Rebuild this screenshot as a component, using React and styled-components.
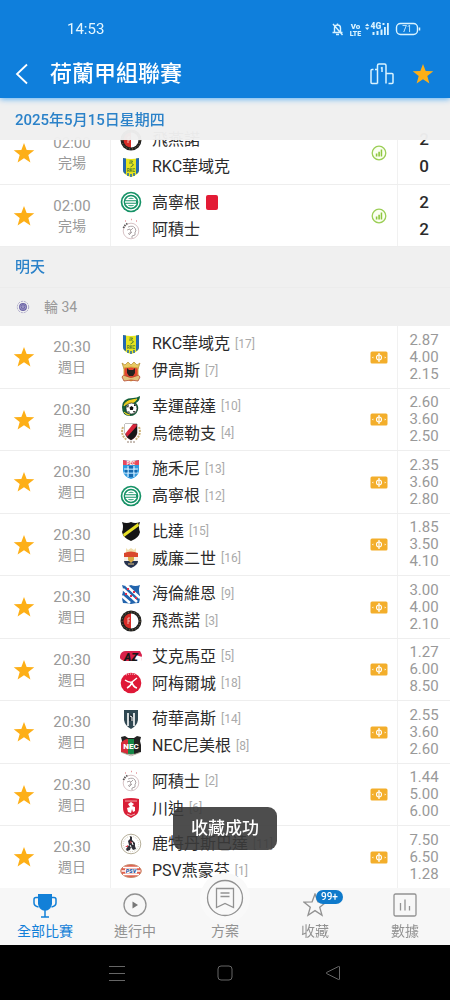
import React from 'react';
import styled, { createGlobalStyle } from 'styled-components';

const Global = createGlobalStyle`
  * { box-sizing: border-box; }
  body {
    margin: 0;
    background: #000;
    font-family: Roboto, "Noto Sans CJK TC", sans-serif;
    color: #2b2b2b;
  }
  button {
    border: 0;
    padding: 0;
    background: none;
    font: inherit;
    color: inherit;
    cursor: pointer;
  }
  svg { display: block; flex: none; }
  ul { list-style: none; margin: 0; padding: 0; }
`;

const Screen = styled.div`
  position: relative;
  display: flex;
  flex-direction: column;
  height: 100vh;
  background: #fff;
`;

const AppHeader = styled.header`
  position: relative;
  z-index: 3;
  flex: none;
  background: #0f7fdc;
  color: #fff;
  box-shadow: 0 1px 6px #58aef2;
`;

const StatusBar = styled.div`
  display: flex;
  align-items: center;
  gap: 8px;
  padding: 19px 28px 0 67px;
  line-height: 20px;
`;

const Clock = styled.time`
  flex: 1;
  color: #e4f6ff;
  font-size: 15px;
`;

const TitleBar = styled.div`
  display: flex;
  align-items: center;
  padding: 17px 16px 7px 14px;
`;

const IconButton = styled.button`
  display: flex;
  align-items: center;
  justify-content: center;
  color: ${(p) => p.$color || 'inherit'};
  margin-left: ${(p) => p.$gap || 0}px;
`;

const Title = styled.h1`
  flex: 1;
  margin: 0 0 0 19px;
  font-size: 22px;
  line-height: 35px;
  font-weight: 500;
`;

const Matches = styled.main`
  flex: 1;
  min-height: 0;
  overflow-y: auto;
  scrollbar-width: none;
`;

const DayHeading = styled.h2`
  position: sticky;
  top: 0;
  z-index: 2;
  margin: 0;
  padding: ${(p) => (p.$pinned ? 2 : 0)}px 15px 0;
  background: rgba(240, 240, 240, 0.97);
  color: #2b82c9;
  font-size: 15px;
  line-height: 40px;
  font-weight: 500;
`;

const RoundHeading = styled.h3`
  display: flex;
  align-items: center;
  gap: 14px;
  margin: 0;
  padding: 0 16px;
  border-top: 1px solid #ececec;
  background: #f0f0f0;
  color: #999;
  font-size: 14px;
  line-height: 38px;
  font-weight: 400;
`;

const MatchList = styled.ul`
  margin-top: ${(p) => (p.$scrolled ? -18 : 0)}px;
`;

const Row = styled.li`
  display: grid;
  grid-template-columns: 48px 48px 14px 1fr 36px 53px;
  align-items: center;
  height: 63px;
  border-bottom: 1px solid #eee;

  &:nth-child(even) { height: 62px; }
`;

const Kickoff = styled.div`
  color: #999;
  text-align: center;
  font-size: 15px;
  line-height: 20px;
`;

const DayName = styled.div`
  font-size: 14px;
`;

const Teams = styled.div`
  grid-column: 4;
  align-self: stretch;
  display: flex;
  flex-direction: column;
  justify-content: center;
  padding-left: 9px;
  border-left: 1px solid #f1f1f1;
`;

const Team = styled.div`
  display: flex;
  align-items: center;
  height: 27px;
  font-size: 16px;
  white-space: nowrap;
`;

const TeamName = styled.span`
  margin-left: 10px;
  font-size: 16px;
  line-height: 27px;
`;

const Rank = styled.span`
  margin-left: 5px;
  color: #aaa;
  font-size: 12px;
`;

const RedCard = styled.span`
  width: 12px;
  height: 15px;
  margin-left: 6px;
  border-radius: 2px;
  background: #e31b35;
`;

const Mark = styled.div`
  display: flex;
  justify-content: center;
`;

const Figures = styled.div`
  display: flex;
  flex-direction: column;
  justify-content: center;
  align-self: stretch;
  border-left: 1px solid #f1f1f1;
  text-align: center;
  color: ${(p) => (p.$final ? '#2b2b2b' : '#999')};
  font-size: ${(p) => (p.$final ? 17 : 15)}px;
  font-weight: ${(p) => (p.$final ? 500 : 400)};
  line-height: ${(p) => (p.$final ? 27 : 17)}px;
`;

const Toast = styled.div`
  position: absolute;
  z-index: 5;
  bottom: 150px;
  left: 50%;
  transform: translateX(-50%);
  padding: 0 18px;
  border-radius: 9px;
  background: rgba(58, 58, 58, 0.9);
  color: #fff;
  font-size: 17px;
  line-height: 43px;
  font-weight: 500;
  white-space: nowrap;
`;

const TabBar = styled.nav`
  position: relative;
  z-index: 3;
  flex: none;
  display: grid;
  grid-template-columns: repeat(5, 1fr);
  background: #f7f7f7;
`;

const Tab = styled.button`
  position: relative;
  display: flex;
  flex-direction: column;
  align-items: center;
  justify-content: flex-end;
  height: 57px;
  padding-bottom: 4px;
  color: ${(p) => (p.$active ? '#1280d8' : '#929292')};
  font-size: 14px;
  line-height: 20px;
`;

const TabIcon = styled.span`
  display: flex;
  align-items: center;
  justify-content: center;
  height: 26px;
  margin-bottom: 3px;
`;

const RaisedIcon = styled.span`
  position: absolute;
  top: -15px;
  display: flex;
  padding: 6px;
  border-radius: 50%;
  background: #f9f9f9;
`;

const Badge = styled.span`
  position: absolute;
  top: 2px;
  left: 50%;
  margin-left: 1px;
  padding: 0 5px;
  border-radius: 8px;
  background: #0f7acb;
  color: #fff;
  font-size: 10px;
  line-height: 14px;
  font-weight: 500;
`;

const SystemBar = styled.div`
  flex: none;
  display: flex;
  justify-content: center;
  align-items: center;
  gap: 92px;
  height: 55px;
  background: #000;
  color: #666;
`;

const Star = ({ size = 22, filled = true }) => (
  <svg width={size} height={size} viewBox="0 0 24 24" fill={filled ? '#fdaf17' : 'none'} stroke={filled ? 'none' : 'currentColor'} strokeWidth="1.3">
    <path d="M12 1l2.9 7.8 8.3.3-6.5 5.2 2.3 8L12 17.6 5 22.3l2.3-8L.8 9.1l8.3-.3z" />
  </svg>
);

const StatusIcons = () => (
  <svg width="91" height="16" viewBox="0 0 91 16" fill="none" stroke="#d9f3ff" strokeWidth="1.4" fontFamily="Roboto">
    <path d="M1.500 11.500h10M3.500 11V7a3 3 0 0 1 6 0V11M6.500 2.500V4M5 13.500h3M2 3l9.500 11" />
    <g fill="#d9f3ff" stroke="none" fontWeight="900">
      <text x="24.500" y="7.500" fontSize="8" textAnchor="middle">Vo</text>
      <text x="24.500" y="14.500" fontSize="7" textAnchor="middle" letterSpacing="0">LTE</text>
      <path d="M34 5l2.200-2.500L38.400 5zM34 6.500L36.200 9l2.200-2.500z" />
      <text x="39.500" y="8" fontSize="8.500">4G</text>
      <path d="M41.500 11h2v3h-2zM45.500 10h2v4h-2zM49.500 8.500h2V14h-2zM51.500 2h2v2h-2zM53 6h1.800v8H53zM56 2h1.800v12H56z" />
    </g>
    <rect x="65.500" y="2.500" width="21" height="11" rx="4" />
    <path d="M88.500 6.500v3" strokeWidth="1.500" />
    <text x="76" y="11" fontSize="8.500" textAnchor="middle" fill="#d9f3ff" stroke="none">71</text>
  </svg>
);

const StatsMark = () => (
  <svg width="16" height="16" viewBox="0 0 16 16" role="img" aria-label="統計">
    <circle cx="8" cy="8" r="6.800" fill="#fbfff2" stroke="#9bce56" strokeWidth="1.300" />
    <path d="M4.800 8.500h1.600v3H4.800zM7.300 6.800h1.600v4.700H7.300zM9.700 4.500h1.500v7H9.700z" fill="#8dc63f" />
  </svg>
);

const OddsMark = () => (
  <svg width="18" height="13" viewBox="0 0 18 13" role="img" aria-label="賠率">
    <rect x=".5" y=".5" width="17" height="12" rx="1.500" fill="#f3ae2b" />
    <circle cx="9" cy="6.500" r="2.500" fill="none" stroke="#fff" strokeWidth="1.100" />
    <path d="M9 2v9" stroke="#fff" strokeWidth="1.200" />
    <path d="M2 6.500l1.300-1v2zM16 6.500l-1.300-1v2z" fill="#fff" />
  </svg>
);

const RoundMark = () => (
  <svg width="14" height="14" viewBox="0 0 14 14" fill="none" stroke="#6b63a6">
    <circle cx="7" cy="7" r="5.700" stroke="#aaa6c8" strokeDasharray="2 1" />
    <circle cx="7" cy="7" r="3.300" fill="#c9c5df" strokeWidth="1.300" />
    <path d="M5 6l2-1.500L9 6 8 9H6zM7 4.500V9" />
  </svg>
);

const crests = {
  rkc: (
    <>
      <path d="M3 2q8 2 16 0v13q-1 4-8 6-7-2-8-6z" fill="#e7e51f" />
      <path d="M3 2l3 .6V18q-3-1-3-4zM19 2l-3 .6V18q3-1 3-4z" fill="#2368b0" />
      <path d="M8 17v3M11 18v3M14 17v3" stroke="#2368b0" strokeWidth="1.500" />
      <path d="M9.500 5h3l-1 2 2 2-3 2M9 7h2" stroke="#4c7d31" fill="none" />
      <text x="11" y="15.500" fontSize="4.500" textAnchor="middle" fill="#4c7d31" fontWeight="700">RKC</text>
    </>
  ),
  gae: (
    <>
      <path d="M2 3l3 2 3-3 3 3 3-3 3 3 3-2-2 6H4z" fill="#e8ca62" stroke="#b38b30" strokeWidth=".7" />
      <path d="M4 8q7-2 14 0v7q-1 4-7 6-6-2-7-6z" fill="#e24431" stroke="#d5a43c" />
      <path d="M7 8l2 2h4l2-2v5l-2 3H9l-2-3z" fill="#25211e" />
      <path d="M2 17q1-3 4-1 5 3 10 0 3-2 4 1l-2 4q-7-2-14 0z" fill="#e1c27c" stroke="#b5472c" strokeWidth=".8" />
    </>
  ),
  fortuna: (
    <>
      <path d="M2 12Q2 3 13 3q4 0 7-2 0 5-4 7 3 3 2 7-2 6-8 6-8 0-8-9z" fill="#17603b" />
      <path d="M4 11q1-5 8-6l5-1q-2 4-7 4-5 1-6 3zM4 17q2 3 6 3" fill="#f0cf22" stroke="#f0cf22" />
      <circle cx="11.500" cy="13.500" r="5.500" fill="#fff" stroke="#222" strokeWidth=".7" />
      <path d="M11.500 11l2 1.500-.7 2.500h-2.600l-.7-2.500zM7 11l2-1-1 3zM14 9l2 2-2 0zM15 16l-1 2-1-2zM8 16l2 1-1 1z" fill="#111" />
    </>
  ),
  utrecht: (
    <>
      <path d="M3 5Q0 13 7 18M19 5q3 8-4 13" fill="none" stroke="#ceb47b" strokeWidth="2" strokeDasharray="2 1" />
      <path d="M5 2h12v9q-1 5-6 7-5-2-6-7z" fill="#d8263b" stroke="#333" strokeWidth=".6" />
      <path d="M5 2h8L5 12z" fill="#fff" />
      <path d="M7 15L17 4v7q-1 4-6 7z" fill="#171717" />
      <path d="M7 20h8" stroke="#b8aba0" strokeWidth="1.500" strokeDasharray="2 1" />
    </>
  ),
  pec: (
    <>
      <path d="M3 2q8 2 16 0v11q-1 6-8 8-7-2-8-8z" fill="#329bdf" />
      <path d="M3 2q8 2 16 0v5H3z" fill="#e9485b" />
      <text x="11" y="6.500" fontSize="4.500" textAnchor="middle" fill="#fff" fontWeight="700">PEC</text>
      <path d="M4 11h14M4 15h14M8 8v11M14 8v11" stroke="#e7f4ff" />
      <path d="M9 8h4v2.500H9zM5 12h2.500v2.500H5zM14.500 12H17v2.500h-2.500zM9 16h4v3H9zM9 12h4v2.500H9z" fill="#1769ae" />
    </>
  ),
  groningen: (
    <>
      <circle cx="11" cy="11" r="10.300" fill="#159266" />
      <circle cx="11" cy="11" r="8" fill="none" stroke="#fff" strokeWidth="1.300" />
      <path d="M15.500 8.500Q14 6 11 6T6.500 8.500zM6.500 13.500Q8 16 11 16t4.500-2.500z" fill="none" stroke="#fff" strokeWidth="1.300" />
      <path d="M5 11h4M9 11h7" stroke="#fff" strokeWidth="1.300" />
    </>
  ),
  nac: (
    <>
      <path d="M2 2q5 2 9 0 4 2 9 0-2 5 0 10-1 6-9 9-8-3-9-9 2-5 0-10z" fill="#151515" />
      <path d="M3 14L18 3l1 3L4 17z" fill="#e7df28" />
    </>
  ),
  willem: (
    <>
      <path d="M6 1l2 2 3-2 3 2 2-2v5H6z" fill="#f0dfae" />
      <path d="M4 6q7-3 14 0v4H4z" fill="#d9472c" />
      <path d="M4 10h14v4H4z" fill="#f6efe4" />
      <path d="M4 14h14q0 4-7 7-7-3-7-7z" fill="#27334f" />
      <path d="M8 10h6v3l-3 3-3-3z" fill="#d8aa43" />
      <path d="M8 17h6" stroke="#e3c887" strokeWidth="1" />
    </>
  ),
  heerenveen: (
    <>
      <path d="M2 2q5 2 9 0 4 2 9 0-2 5 0 10 0 5-1 8-4 0-8 1-4-1-8-1-1-3-1-8 2-5 0-10z" fill="#2264ad" />
      <path d="M3 6l14 13M6 2l14 13M2 13l8 7" stroke="#fff" strokeWidth="2.500" />
      <path d="M7 5h2v2H7zM13 8h2v2h-2zM5 10h2v2H5zM10 12h2v2h-2zM15 14h2v2h-2z" fill="#df304c" />
    </>
  ),
  feyenoord: (
    <>
      <circle cx="11" cy="11" r="10.500" fill="#222" />
      <circle cx="11" cy="11" r="9" fill="none" stroke="#8d7746" strokeWidth="1" strokeDasharray="1 2" />
      <path d="M11 3.500a7.500 7.500 0 0 0 0 15z" fill="#d92c27" />
      <path d="M11 3.500a7.500 7.500 0 0 1 0 15z" fill="#fff" />
      <path d="M8 8v6M8 8h2M8 11h2" fill="none" stroke="#f4cdc6" strokeWidth=".9" />
    </>
  ),
  az: (
    <>
      <path d="M0 11q1-5 6-5h14l2 4-1 6H5q-6-1-5-5z" fill="#d8204b" />
      <path d="M16 10l6 2-1 5-6-2z" fill="#fff" />
      <text x="11" y="15.500" fontSize="11" textAnchor="middle" fill="#171717" fontWeight="900" fontStyle="italic">AZ</text>
    </>
  ),
  almere: (
    <>
      <circle cx="11" cy="11" r="10.300" fill="#df1837" />
      <path d="M5 8q4 3 7 2M12 10l5-4M12 10q1 5 5 6M12 10q-1 4-5 6" fill="none" stroke="#fff" strokeWidth="1.500" />
      <path d="M6 3q5-2 10 0" stroke="#fff" strokeDasharray="1 1" fill="none" />
    </>
  ),
  heracles: (
    <>
      <path d="M4 2h14v10q-1 6-7 9-6-3-7-9z" fill="#304852" />
      <path d="M8 5v13M14 5v13" stroke="#fff" strokeWidth="1.600" />
      <path d="M9 8l2-2 2 2v5H9z" fill="#1f2d35" />
      <path d="M10 8l2 1v4" stroke="#fff" fill="none" />
    </>
  ),
  nec: (
    <>
      <path d="M1 2l4-1 3 2h6l3-2 4 1-1 4 1 4v7q-5 2-10 4Q6 19 1 17v-7l1-4z" fill="#222" />
      <path d="M1 8q3-4 7-4v15q-4-1-7-2z" fill="#d72c38" />
      <path d="M8 4h6v15H8z" fill="#168747" />
      <text x="11" y="13.500" fontSize="8" textAnchor="middle" fill="#fff" fontWeight="900">NEC</text>
      <path d="M2 17.500q9 4 18 0l-9 3.500z" stroke="#b9b09c" strokeWidth=".5" fill="#fff" />
    </>
  ),
  ajax: (
    <>
      <circle cx="11" cy="13" r="7.800" fill="#fff" stroke="#d4bcc0" strokeWidth=".9" />
      <path d="M5 3h1M11 1.500h1M16 3h1" stroke="#e59aa0" strokeWidth="1.500" />
      <path d="M8 9q5-2 7 1l1 3-1 1v3l-3 1v2M7 12l3-1 1 3-3 2M9 17l3-3M13 10l-2 2" fill="none" stroke="#a39a9c" strokeWidth=".9" />
      <path d="M3.500 10q1-3 4-4.500" fill="none" stroke="#555" strokeWidth="1.800" strokeDasharray="1.300 1" />
    </>
  ),
  twente: (
    <>
      <path d="M3 2q8-2 16 0v8q0 6-3 8l-5 3-5-3q-3-2-3-8z" fill="#d91e36" />
      <path d="M5 4h12M7 17q4 3 8 0" stroke="#efa5a7" strokeWidth="1" fill="none" />
      <path d="M8 15l-1-4 3-1-2-3 3-2 3 2-2 2 3 1v4l-2 1-1-3-1 4z" fill="#fff" />
    </>
  ),
  sparta: (
    <>
      <circle cx="11" cy="11" r="9.800" fill="#fff" stroke="#b7b09b" />
      <circle cx="11" cy="11" r="7.700" fill="none" stroke="#d5cfbd" strokeDasharray="1 1" />
      <path d="M10 3l2 1v3l3 3v3l1 3-3 1-2-3-1 3-3 1-1-2 3-4-1-4 2-2z" fill="#303038" />
      <path d="M10 8l2 1-1 2zM5 14l3-2v2z" fill="#d93a46" />
      <path d="M12 9l1 3M10 12l1 2" stroke="#fff" />
    </>
  ),
  psv: (
    <>
      <ellipse cx="11" cy="11" rx="10.300" ry="6.500" fill="#e0604f" stroke="#c98a6c" />
      <path d="M3 7.500h16M1.500 11h19M3 14.500h16" stroke="#fff" strokeWidth="1.500" />
      <path d="M5 8.500h12v5H5z" fill="#fff" />
      <text x="11" y="13" fontSize="5.500" textAnchor="middle" fill="#28529d" fontWeight="900" fontStyle="italic">PSV</text>
    </>
  ),
};

const Crest = ({ club }) => (
  <svg width="22" height="22" viewBox="0 0 22 22" fontFamily="Roboto" aria-hidden="true">
    {crests[club]}
  </svg>
);

const finished = [
  { time: '02:00', day: '完場', teams: [['feyenoord', '飛燕諾'], ['rkc', 'RKC華域克']], figures: ['2', '0'] },
  { time: '02:00', day: '完場', teams: [['groningen', '高寧根', null, true], ['ajax', '阿積士']], figures: ['2', '2'] },
];

const fixture = (home, away, figures) => ({ time: '20:30', day: '週日', teams: [home, away], figures });

const upcoming = [
  fixture(['rkc', 'RKC華域克', 17], ['gae', '伊高斯', 7], ['2.87', '4.00', '2.15']),
  fixture(['fortuna', '幸運薛達', 10], ['utrecht', '烏德勒支', 4], ['2.60', '3.60', '2.50']),
  fixture(['pec', '施禾尼', 13], ['groningen', '高寧根', 12], ['2.35', '3.60', '2.80']),
  fixture(['nac', '比達', 15], ['willem', '威廉二世', 16], ['1.85', '3.50', '4.10']),
  fixture(['heerenveen', '海倫維恩', 9], ['feyenoord', '飛燕諾', 3], ['3.00', '4.00', '2.10']),
  fixture(['az', '艾克馬亞', 5], ['almere', '阿梅爾城', 18], ['1.27', '6.00', '8.50']),
  fixture(['heracles', '荷華高斯', 14], ['nec', 'NEC尼美根', 8], ['2.55', '3.60', '2.60']),
  fixture(['ajax', '阿積士', 2], ['twente', '川迪', 6], ['1.44', '5.00', '6.00']),
  fixture(['sparta', '鹿特丹斯巴達', 11], ['psv', 'PSV燕豪芬', 1], ['7.50', '6.50', '1.28']),
];

const MatchRow = ({ match, final }) => (
  <Row>
    <IconButton aria-label="收藏"><Star /></IconButton>
    <Kickoff>
      {match.time}
      <DayName>{match.day}</DayName>
    </Kickoff>
    <Teams>
      {match.teams.map(([club, name, rank, sentOff]) => (
        <Team key={club}>
          <Crest club={club} />
          <TeamName>{name}</TeamName>
          {rank && <Rank>[{rank}]</Rank>}
          {sentOff && <RedCard />}
        </Team>
      ))}
    </Teams>
    <Mark>{final ? <StatsMark /> : <OddsMark />}</Mark>
    <Figures $final={final}>
      {match.figures.map((value, i) => <span key={i}>{value}</span>)}
    </Figures>
  </Row>
);

export default function App() {
  return (
    <>
      <Global />
      <Screen>
        <AppHeader>
          <StatusBar>
            <Clock>14:53</Clock>
            <StatusIcons />
          </StatusBar>
          <TitleBar>
            <IconButton aria-label="返回">
              <svg width="17" height="22" viewBox="0 0 17 22" fill="none" stroke="#fff" strokeWidth="1.800">
                <path d="M13 1.500L3 11l10 9.500" />
              </svg>
            </IconButton>
            <Title>荷蘭甲組聯賽</Title>
            <IconButton aria-label="積分榜">
              <svg width="24" height="22" viewBox="0 0 24 22" fill="none" stroke="#d9f3ff" strokeWidth="1.500" strokeLinejoin="round">
                <path d="M7.500 20.500V2.500q0-1.500 1.500-1.500h5.500q1.500 0 1.500 1.500v18M7.500 6.500H5M3.500 6.500H2q-1 0-1 1v12q0 1 1 1h5.500M16 10.500h6q1 0 1 1v8q0 1-1 1h-3.500M11 5.500l1-1V9" />
              </svg>
            </IconButton>
            <IconButton aria-label="收藏聯賽" $gap={18}><Star /></IconButton>
          </TitleBar>
        </AppHeader>

        <Matches>
          <section>
            <DayHeading $pinned>2025年5月15日星期四</DayHeading>
            <MatchList $scrolled>
              {finished.map((m, i) => <MatchRow key={i} match={m} final />)}
            </MatchList>
          </section>
          <section>
            <DayHeading>明天</DayHeading>
            <RoundHeading><RoundMark />輪 34</RoundHeading>
            <MatchList>
              {upcoming.map((m, i) => <MatchRow key={i} match={m} />)}
            </MatchList>
          </section>
        </Matches>

        <TabBar>
          <Tab $active>
            <TabIcon>
              <svg width="24" height="25" viewBox="0 0 24 25" fill="none" stroke="currentColor" strokeWidth="1.500">
                <path d="M5 1h14v10q-1 5-5 6.500h-4Q6 16 5 11z" fill="currentColor" stroke="none" />
                <path d="M5 4.500H3q-2 0-2 2V10q0 3 4.500 4M19 4.500h2q2 0 2 2V10q0 3-4.500 4M12 16v7.500M8 24h8" />
              </svg>
            </TabIcon>
            全部比賽
          </Tab>
          <Tab>
            <TabIcon>
              <svg width="24" height="24" viewBox="0 0 24 24" fill="none" stroke="currentColor" strokeWidth="1.300">
                <circle cx="12" cy="12" r="11" />
                <path d="M9.500 8.500v7l5.500-3.500z" fill="#777" stroke="none" />
              </svg>
            </TabIcon>
            進行中
          </Tab>
          <Tab>
            <RaisedIcon>
              <svg width="38" height="38" viewBox="0 0 38 38" fill="none" stroke="currentColor" strokeWidth="1.300">
                <circle cx="19" cy="19" r="17.500" />
                <path d="M10.500 9.500h17v19L19 24.500l-8.500 4zM14.500 14h9M14.500 17.500h9" />
              </svg>
            </RaisedIcon>
            方案
          </Tab>
          <Tab>
            <TabIcon><Star size={24} filled={false} /></TabIcon>
            <Badge>99+</Badge>
            收藏
          </Tab>
          <Tab>
            <TabIcon>
              <svg width="24" height="24" viewBox="0 0 24 24" fill="none" stroke="currentColor" strokeWidth="1.300">
                <rect x="1" y="1" width="22" height="22" rx="1.500" />
                <path d="M7.500 10v7.500M12 6.500v11M16.500 13v4.500" />
              </svg>
            </TabIcon>
            數據
          </Tab>
        </TabBar>

        <SystemBar>
          <IconButton aria-label="選單">
            <svg width="16" height="16" viewBox="0 0 16 16" stroke="currentColor"><path d="M0 1.500h16M0 8.500h16M0 15.500h16" /></svg>
          </IconButton>
          <IconButton aria-label="主畫面">
            <svg width="16" height="16" viewBox="0 0 16 16" fill="none" stroke="currentColor"><rect x="1" y="1" width="14" height="14" rx="3" /></svg>
          </IconButton>
          <IconButton aria-label="上一頁">
            <svg width="16" height="16" viewBox="0 0 16 16" fill="none" stroke="currentColor" strokeLinejoin="round"><path d="M14.500 2v12q0 1-1 .5L1.500 8.500q-1-.5 0-1L13.500 1.500q1-.5 1 .5z" /></svg>
          </IconButton>
        </SystemBar>

        <Toast role="status">收藏成功</Toast>
      </Screen>
    </>
  );
}
